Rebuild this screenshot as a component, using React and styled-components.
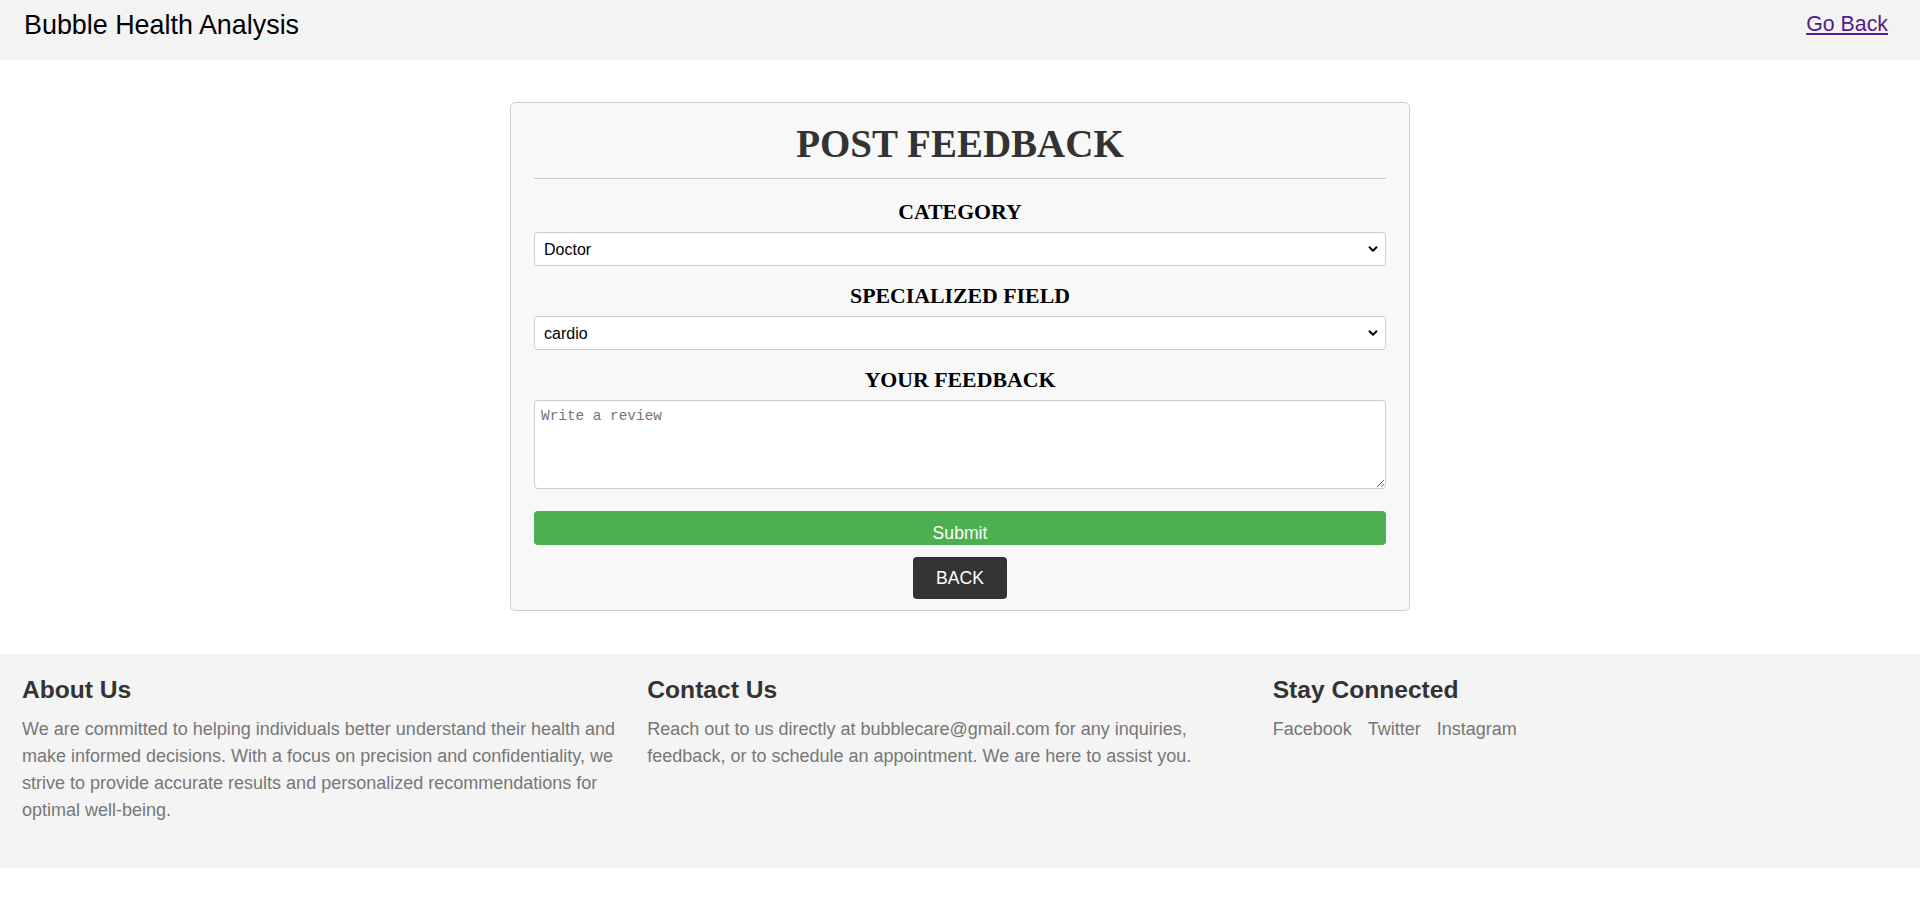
import styled, { createGlobalStyle } from "styled-components";
import { ChevronDown } from "lucide-react";

const GlobalStyle = createGlobalStyle`
  html, body {
    margin: 0;
    padding: 0;
    background: #ffffff;
    font-family: "Liberation Serif", "Times New Roman", serif;
  }
  * {
    box-sizing: border-box;
  }
`;

const Header = styled.header`
  display: flex;
  justify-content: space-between;
  align-items: flex-start;
  height: 60px;
  padding: 10px 32px 0 24px;
  background-color: #f3f3f3;
`;

const Brand = styled.div`
  font-family: "Liberation Sans", Arial, sans-serif;
  font-size: 26.9px;
  color: #000;
`;

const BackLink = styled.a`
  margin-top: 2px;
  font-family: "Liberation Sans", Arial, sans-serif;
  font-size: 21.33px;
  color: #551a8b;
  text-decoration: underline;
  cursor: pointer;
`;

const Main = styled.main`
  padding: 42px 0 43px;
`;

const Card = styled.div`
  width: 900px;
  margin: 0 auto;
  padding: 18px 23px 11px;
  background-color: #f8f8f8;
  border: 1px solid #cccccc;
  border-radius: 5px;
`;

const Title = styled.h1`
  margin: 0;
  padding-bottom: 12px;
  border-bottom: 1px solid #cccccc;
  font-size: 39px;
  line-height: 45px;
  font-weight: bold;
  text-align: center;
  color: #333333;
`;

const Form = styled.form`
  display: flex;
  flex-direction: column;
  padding-top: 21px;
`;

const Group = styled.div`
  display: flex;
  flex-direction: column;
  margin-bottom: ${(p) => p.$gap || 18}px;
`;

const Label = styled.label`
  display: block;
  margin-bottom: 7px;
  font-size: 21.8px;
  line-height: 25px;
  font-weight: bold;
  text-align: center;
  color: #000;
`;

const SelectWrap = styled.div`
  position: relative;
`;

const Select = styled.select`
  display: block;
  width: 100%;
  height: 34px;
  padding: 0 28px 0 9px;
  font-family: "Liberation Sans", Arial, sans-serif;
  font-size: 16px;
  color: #000;
  background-color: #fff;
  border: 1px solid #cccccc;
  border-radius: 4px;
  appearance: none;
  -webkit-appearance: none;
`;

const Chevron = styled(ChevronDown)`
  position: absolute;
  right: 6px;
  top: 50%;
  transform: translateY(-50%);
  pointer-events: none;
  color: #000;
`;

const TextArea = styled.textarea`
  display: block;
  width: 100%;
  height: 89px;
  padding: 7px 6px 5px;
  font-family: "Liberation Mono", "Courier New", monospace;
  font-size: 14.4px;
  background-color: #fff;
  border: 1px solid #cccccc;
  border-radius: 4px;
  resize: vertical;

  &::placeholder {
    color: #757575;
  }
`;

const SubmitButton = styled.button`
  width: 100%;
  height: 34px;
  padding: 10px 0 0;
  font-family: "Liberation Sans", Arial, sans-serif;
  font-size: 17.6px;
  line-height: 20px;
  color: #fff;
  background-color: #4caf50;
  border: none;
  border-radius: 4px;
  cursor: pointer;
`;

const BackButton = styled.button`
  align-self: center;
  margin-top: 12px;
  height: 42px;
  padding: 0 23px;
  font-family: "Liberation Sans", Arial, sans-serif;
  font-size: 17.6px;
  line-height: 20px;
  color: #fff;
  background-color: #333333;
  border: none;
  border-radius: 4px;
  cursor: pointer;
`;

const Footer = styled.footer`
  display: grid;
  grid-template-columns: repeat(3, 1fr);
  padding: 22px 22px 44px;
  background-color: #f4f4f4;
  font-family: "Liberation Sans", Arial, sans-serif;
`;

const FooterSection = styled.div`
  padding-right: 20px;
`;

const FooterTitle = styled.h2`
  margin: 0 0 12px;
  font-size: 24.6px;
  line-height: 28px;
  font-weight: bold;
  color: #333333;
`;

const FooterText = styled.p`
  margin: 0;
  font-size: 18px;
  line-height: 27px;
  color: #777777;
`;

const Socials = styled.div`
  display: flex;
  gap: 16px;
`;

const SocialLink = styled.a`
  font-size: 18px;
  line-height: 27px;
  color: #777777;
  text-decoration: none;
`;

function Dropdown({ id, value, options }) {
  return (
    <SelectWrap>
      <Select id={id} defaultValue={value}>
        {options.map((o) => (
          <option key={o}>{o}</option>
        ))}
      </Select>
      <Chevron size={14} strokeWidth={3.2} />
    </SelectWrap>
  );
}

export default function App() {
  return (
    <>
      <GlobalStyle />
      <Header>
        <Brand>Bubble Health Analysis</Brand>
        <BackLink href="#">Go Back</BackLink>
      </Header>

      <Main>
        <Card>
          <Title>POST FEEDBACK</Title>
          <Form onSubmit={(e) => e.preventDefault()}>
            <Group>
              <Label htmlFor="category">CATEGORY</Label>
              <Dropdown id="category" value="Doctor" options={["Doctor", "Hospital"]} />
            </Group>
            <Group>
              <Label htmlFor="field">SPECIALIZED FIELD</Label>
              <Dropdown id="field" value="cardio" options={["cardio", "neuro"]} />
            </Group>
            <Group $gap={22}>
              <Label htmlFor="feedback">YOUR FEEDBACK</Label>
              <TextArea id="feedback" placeholder="Write a review" />
            </Group>
            <SubmitButton type="submit">Submit</SubmitButton>
            <BackButton type="button">BACK</BackButton>
          </Form>
        </Card>
      </Main>

      <Footer>
        <FooterSection>
          <FooterTitle>About Us</FooterTitle>
          <FooterText>
            We are committed to helping individuals better understand their
            health and make informed decisions. With a focus on precision and
            confidentiality, we strive to provide accurate results and
            personalized recommendations for optimal well-being.
          </FooterText>
        </FooterSection>
        <FooterSection>
          <FooterTitle>Contact Us</FooterTitle>
          <FooterText>
            Reach out to us directly at bubblecare@gmail.com for any inquiries,
            feedback, or to schedule an appointment. We are here to assist you.
          </FooterText>
        </FooterSection>
        <FooterSection>
          <FooterTitle>Stay Connected</FooterTitle>
          <Socials>
            <SocialLink href="#">Facebook</SocialLink>
            <SocialLink href="#">Twitter</SocialLink>
            <SocialLink href="#">Instagram</SocialLink>
          </Socials>
        </FooterSection>
      </Footer>
    </>
  );
}
